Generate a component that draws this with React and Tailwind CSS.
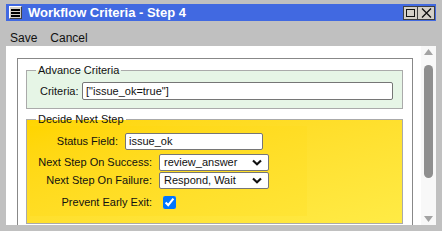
import { useState } from 'react';

const Chevron = () => (
  <svg width="10" height="7" viewBox="0 0 10 7" className="shrink-0">
    <path d="M1 1.5 L5 5.2 L9 1.5" fill="none" stroke="#111" strokeWidth="2.2" />
  </svg>
);

const FakeSelect = ({ value }) => (
  <div className="w-[110px] h-[17px] bg-white border border-[#767676] rounded-[2px] flex items-center justify-between pl-[4px] pr-[6px] overflow-hidden">
    <span className="whitespace-nowrap">{value}</span>
    <Chevron />
  </div>
);

const App = () => {
  const [preventExit, setPreventExit] = useState(true);

  return (
    <div
      className="w-[442px] h-[231px] bg-[#c0c0c0] px-[6px] pt-[4px] pb-[6px] flex flex-col text-[11px] text-[#111] overflow-hidden"
      style={{ fontFamily: '"Liberation Sans", Arial, sans-serif' }}
    >
      {/* Title bar */}
      <div className="h-[17px] bg-[#4169e1] flex items-center shrink-0">
        <div className="ml-[3px] w-[13px] h-[13px] bg-[#d4d0c8] border-t border-l border-white border-r border-b border-r-[#404040] border-b-[#404040] flex items-center justify-center">
          <svg width="9" height="8" viewBox="0 0 9 8">
            <rect x="0" y="0" width="9" height="2" fill="#000" />
            <rect x="0" y="3" width="9" height="2" fill="#000" />
            <rect x="0" y="6" width="9" height="2" fill="#000" />
          </svg>
        </div>
        <span className="ml-[6px] text-white font-bold text-[13px] leading-none">Workflow Criteria - Step 4</span>
        <div className="ml-auto mr-[1px] flex">
          <div className="w-[15px] h-[14px] bg-[#d4d0c8] border border-[#404040] flex items-center justify-center">
            <div className="w-[9px] h-[8px] border border-[#111]" />
          </div>
          <div className="w-[17px] h-[14px] bg-[#d4d0c8] border border-l-0 border-[#404040] flex items-center justify-center">
            <svg width="11" height="10" viewBox="0 0 11 10">
              <path d="M1 0.5 L10 9.5 M10 0.5 L1 9.5" stroke="#111" strokeWidth="1.3" />
            </svg>
          </div>
        </div>
      </div>

      {/* Menu */}
      <div className="h-[25px] flex items-center gap-[13px] pl-[4px] pt-[8px] text-[12px] shrink-0">
        <span>Save</span>
        <span>Cancel</span>
      </div>

      {/* Content panel */}
      <div className="flex-1 bg-white flex min-h-0">
        <div className="flex-1 pl-[11px] pr-[8px] pt-[12px] overflow-hidden">
          <div className="h-[200px] border-t border-l border-r border-[#888] pl-[8px] pr-[9px] pt-[5px]">
            {/* Advance Criteria */}
            <fieldset className="border border-[#aaa] bg-[#e6f5e6] px-[9px] pb-[8px]">
              <legend className="px-[2px] leading-[13px]">Advance Criteria</legend>
              <div className="flex items-center mt-[5px] pl-[4px]">
                <span className="w-[42px]">Criteria:</span>
                <div className="flex-1 h-[18px] border border-[#767676] rounded-[2px] bg-white flex items-center px-[3px]">
                  ["issue_ok=true"]
                </div>
              </div>
            </fieldset>

            {/* Decide Next Step */}
            <fieldset className="mt-[4px] border border-[#aaa] bg-linear-to-br from-[#ffd500] to-[#ffeb45] px-[3px] pb-[7px]">
              <legend className="ml-[6px] px-[2px] leading-[13px]">Decide Next Step</legend>
              <div className="w-[277px] bg-linear-to-br from-[#ffd500] to-[#ffe536] pt-[7px] pb-[5px] flex flex-col">
                <div className="flex items-center">
                  <span className="w-[88px] text-right">Status Field:</span>
                  <div className="ml-[7px] w-[138px] h-[17px] border border-[#767676] rounded-[2px] bg-white flex items-center px-[3px]">
                    issue_ok
                  </div>
                </div>
                <div className="flex items-center mt-[4px]">
                  <span className="w-[122px] text-right">Next Step On Success:</span>
                  <div className="ml-[7px]"><FakeSelect value="review_answer" /></div>
                </div>
                <div className="flex items-center mt-[1px]">
                  <span className="w-[122px] text-right">Next Step On Failure:</span>
                  <div className="ml-[7px]"><FakeSelect value="Respond, Wait" /></div>
                </div>
                <div className="flex items-center mt-[5px]">
                  <span className="w-[122px] text-right">Prevent Early Exit:</span>
                  <input
                    type="checkbox"
                    checked={preventExit}
                    onChange={() => setPreventExit(!preventExit)}
                    className="ml-[11px] w-[13px] h-[13px] accent-[#0075ff] m-0"
                  />
                </div>
              </div>
            </fieldset>
          </div>
        </div>

        {/* Scrollbar */}
        <div className="w-[15px] bg-[#f8f8f8] flex flex-col items-center pt-[3px] pb-[3px]">
          <svg width="9" height="6" viewBox="0 0 9 6"><path d="M4.5 0 L9 6 L0 6 Z" fill="#a3a3a3" /></svg>
          <div className="mt-[10px] w-[9px] h-[113px] rounded-full bg-[#8f8f8f]" />
          <div className="flex-1" />
          <svg width="9" height="6" viewBox="0 0 9 6"><path d="M0 0 L9 0 L4.5 6 Z" fill="#a3a3a3" /></svg>
        </div>
      </div>
    </div>
  );
};

export default App;
